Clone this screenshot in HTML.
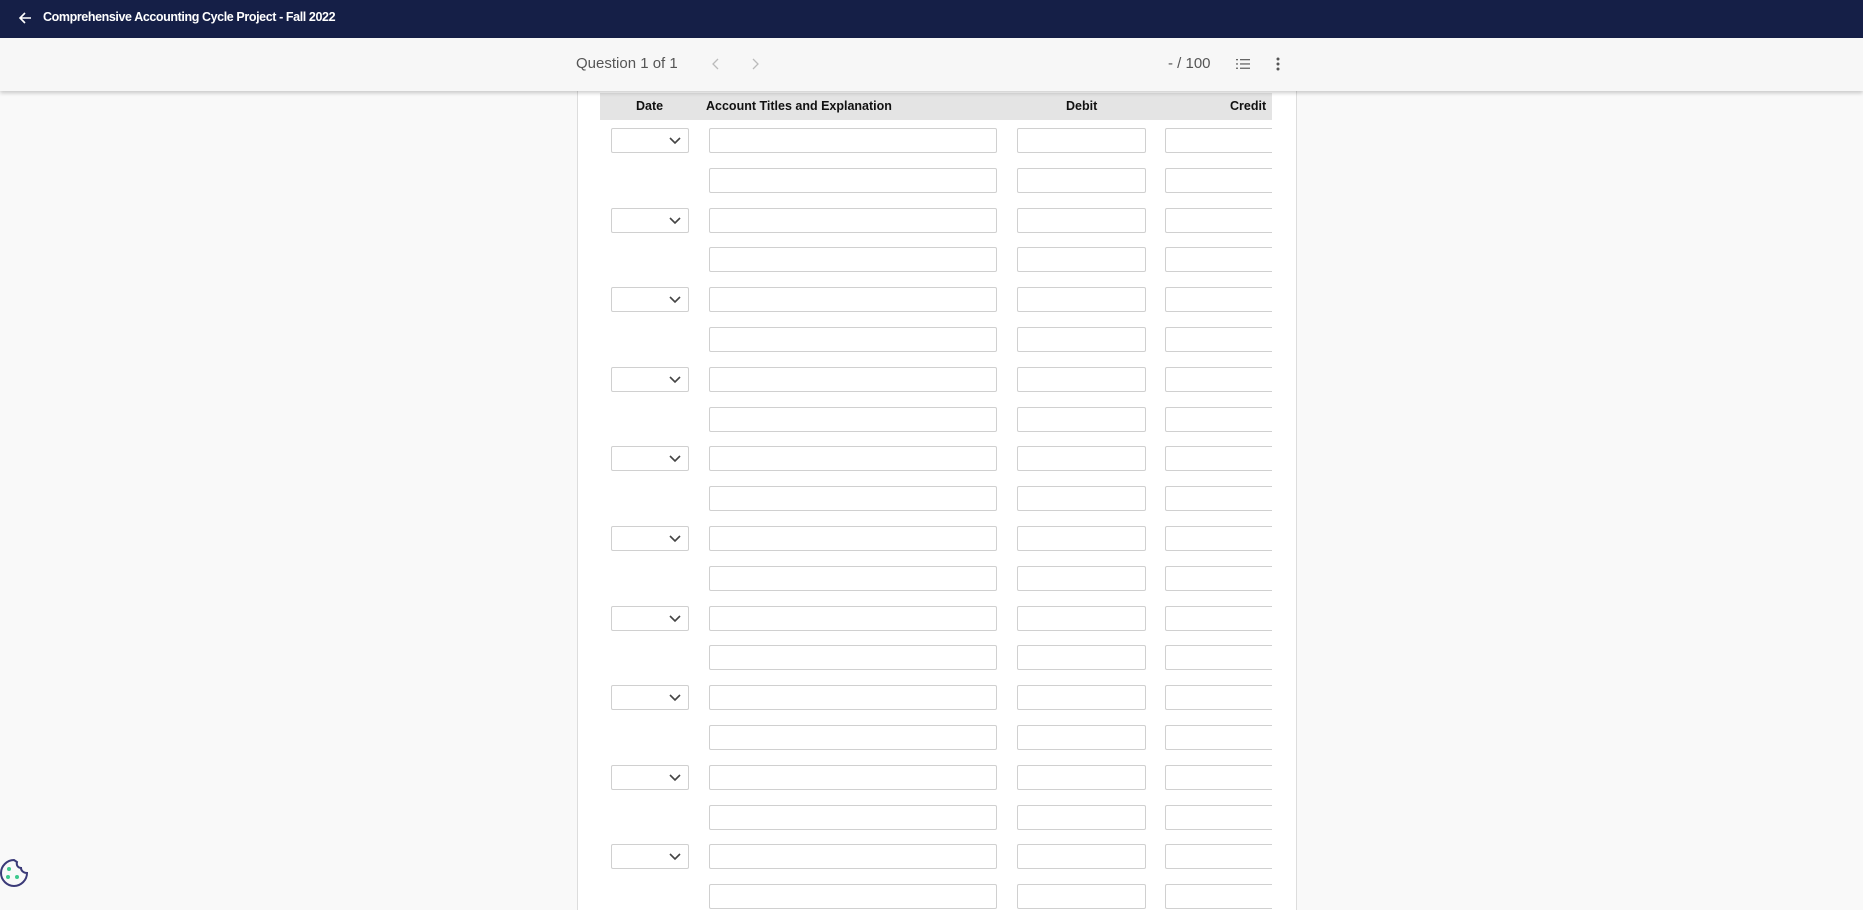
<!DOCTYPE html>
<html><head><style>
*{box-sizing:border-box;margin:0;padding:0}
body{width:1863px;height:897px;overflow:hidden;background:#f9f9f9;font-family:"Liberation Sans",sans-serif;position:relative}
.top{position:absolute;left:0;top:0;width:1863px;height:38px;background:#151f47;color:#fff}
.top .t{position:absolute;left:43px;top:10px;font-size:12.5px;font-weight:bold;letter-spacing:-0.4px}
.sub{position:absolute;left:0;top:38px;width:1863px;height:53px;background:#f7f7f7;box-shadow:0 2px 4px rgba(0,0,0,.2);z-index:2}
.panel{position:absolute;left:577px;top:80px;width:720px;height:830px;background:#fff;border-left:1px solid #ddd;border-right:1px solid #ddd}
.hdr{position:absolute;left:600px;top:93px;width:672px;height:27px;background:#e4e4e4;font-size:12.5px;font-weight:bold;color:#111;overflow:hidden}
.hdr span{position:absolute;top:6px}
.in{position:absolute;height:25px;background:#fff;border:1px solid #d0d0d0;border-radius:2px}
.clip{position:absolute;left:600px;top:120px;width:672px;height:790px;overflow:hidden}
</style></head><body>
<div class="top"><svg style="position:absolute;left:18px;top:11px" width="14" height="14" viewBox="0 0 14 14"><path d="M13 7H2M7 2L2 7l5 5" stroke="#fff" stroke-width="1.6" fill="none"/></svg><div class="t">Comprehensive Accounting Cycle Project - Fall 2022</div></div>
<div class="sub">
<div style="position:absolute;left:576px;top:17px;font-size:15px;color:#555">Question 1 of 1</div>
<svg style="position:absolute;left:711px;top:20px" width="10" height="12"><path d="M7 1L2 6l5 5" stroke="#bbb" fill="none" stroke-width="1.3"/></svg>
<svg style="position:absolute;left:750px;top:20px" width="10" height="12"><path d="M3 1l5 5-5 5" stroke="#bbb" fill="none" stroke-width="1.3"/></svg>
<div style="position:absolute;left:1168px;top:17px;font-size:15px;color:#555">- / 100</div>
<svg style="position:absolute;left:1235px;top:19px" width="16" height="14"><g fill="#666"><rect x="5" y="2" width="10" height="1.3"/><rect x="5" y="6.3" width="10" height="1.3"/><rect x="5" y="10.6" width="10" height="1.3"/><rect x="1" y="2" width="2" height="1.3"/><rect x="1" y="6.3" width="2" height="1.3"/><rect x="1" y="10.6" width="2" height="1.3"/></g></svg>
<svg style="position:absolute;left:1276px;top:18px" width="4" height="16"><g fill="#555"><circle cx="2" cy="3" r="1.5"/><circle cx="2" cy="8" r="1.5"/><circle cx="2" cy="13" r="1.5"/></g></svg>
</div>
<div class="panel"></div>
<div class="hdr"><span style="left:36px">Date</span><span style="left:106px">Account Titles and Explanation</span><span style="left:466px">Debit</span><span style="left:630px">Credit</span></div>
<div class="clip" id="c"></div>
<svg style="position:absolute;left:0;top:858px" width="30" height="32" viewBox="0 0 30 32"><path d="M14 2C7 2 1 8 1 15s6 13 13 13 13-6 13-13c-3 0-6-2-6-5-3 0-5-3-4-6z" fill="none" stroke="#3b3a78" stroke-width="2"/><g fill="#3ec98e"><circle cx="9" cy="11" r="2"/><circle cx="8" cy="19" r="2"/><circle cx="17" cy="19" r="2"/></g></svg>
<script>
var c=document.getElementById('c'),h='';
for(var i=0;i<20;i++){var y=8+i*39.8;
if(i%2==0)h+='<div class="in" style="left:11px;top:'+y+'px;width:78px"><svg style="position:absolute;right:7px;top:8px" width="12" height="8"><path d="M1 1l5 5 5-5" stroke="#444" fill="none" stroke-width="1.6"/></svg></div>';
h+='<div class="in" style="left:109px;top:'+y+'px;width:288px"></div>';
h+='<div class="in" style="left:417px;top:'+y+'px;width:129px"></div>';
h+='<div class="in" style="left:565px;top:'+y+'px;width:120px"></div>';}
c.innerHTML=h;
</script>
</body></html>
